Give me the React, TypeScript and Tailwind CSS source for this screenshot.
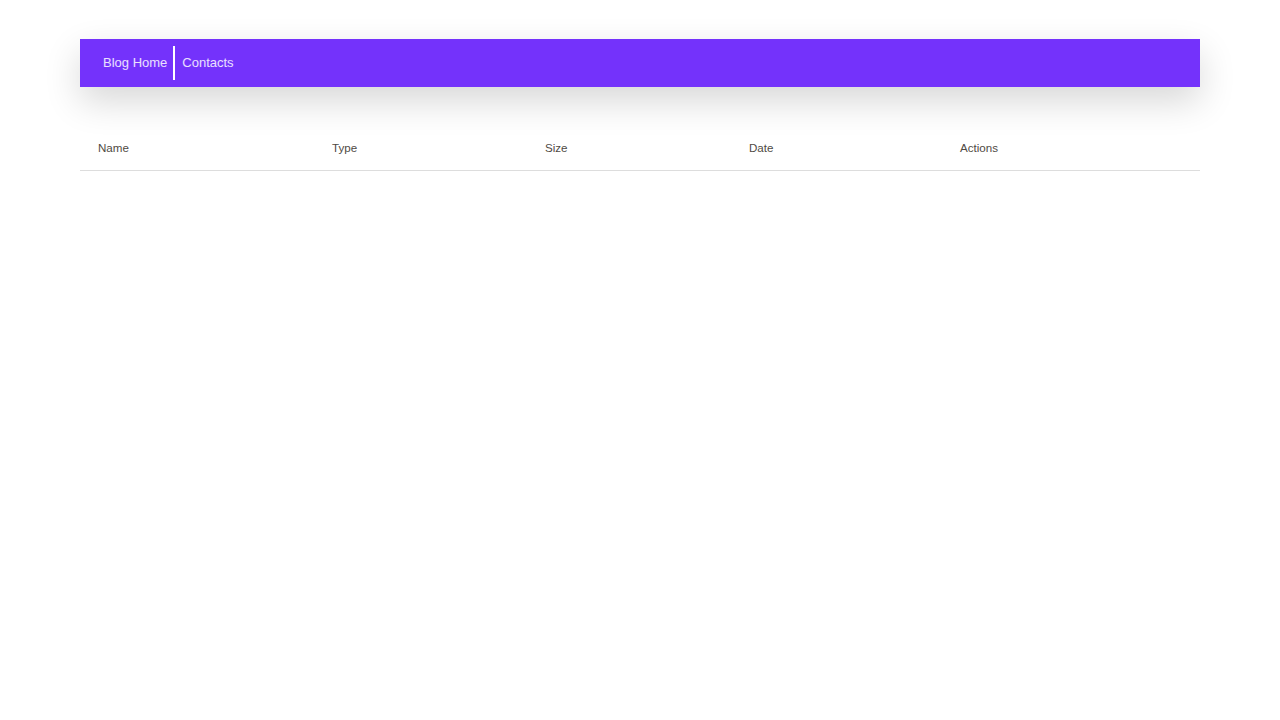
import React from 'react';

const columns = ['Name', 'Type', 'Size', 'Date', 'Actions'];

const App: React.FC = () => {
  return (
    <div className="min-h-screen bg-white font-['Liberation_Sans',Arial,sans-serif]">
      <div className="mx-[80px] pt-[39px]">
        {/* Nav */}
        <nav className="flex h-[48px] items-center bg-[#7432fb] pl-[23px] shadow-[0_14px_36px_rgba(0,0,0,0.16)]">
          <a href="#" className="text-[13px] text-white/85">Blog Home</a>
          <span className="mx-[6px] h-[34px] w-[2px] bg-white" />
          <a href="#" className="ml-[1px] text-[13px] text-white/85">Contacts</a>
        </nav>

        {/* Table header */}
        <div className="mt-[39px] grid h-[45px] grid-cols-[234px_213px_204px_211px_1fr] items-center border-b border-[#dddddd] text-[11.6px] text-[#4f4a44]">
          {columns.map((col) => (
            <div key={col} className="pl-[18px]">{col}</div>
          ))}
        </div>
      </div>
    </div>
  );
};

export default App;
